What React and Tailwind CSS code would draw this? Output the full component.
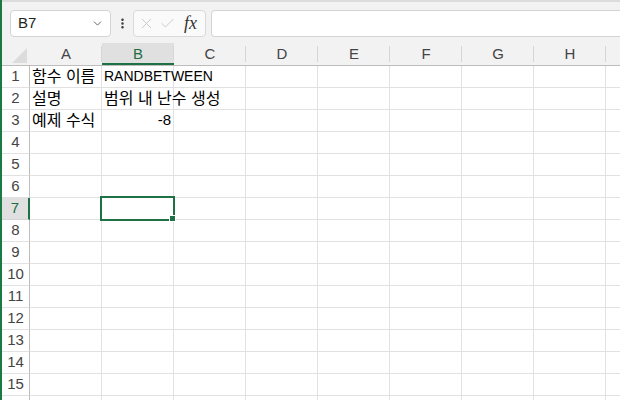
import { ChevronDown, EllipsisVertical, X, Check } from 'lucide-react';

const COLS = ['A', 'B', 'C', 'D', 'E', 'F', 'G', 'H', ''];
const ACTIVE_COL = 'B';
const ACTIVE_ROW = 7;

const DATA = {
  1: { A: '함수 이름', B: 'RANDBETWEEN' },
  2: { A: '설명', B: '범위 내 난수 생성' },
  3: { A: '예제 수식', B: -8 },
};

const font = { fontFamily: '"Liberation Sans", "Noto Sans CJK KR", sans-serif' };
const hangul = /[\uac00-\ud7a3]/;

const FormulaBar = () => (
  <div className="h-[41px] flex items-start pt-[8px] pl-[8px]">
    <div className="w-[101px] h-[27px] bg-white border border-[#d4d4d4] rounded-[4px] flex items-center pl-[7px] pr-[6px] justify-between">
      <span className="text-[15px] text-[#222]">B7</span>
      <ChevronDown className="w-[13px] h-[13px] text-[#555]" strokeWidth={1.6} />
    </div>
    <div className="w-[22px] h-[27px] flex items-center justify-center">
      <EllipsisVertical className="w-[13px] h-[13px] text-[#333]" strokeWidth={2.6} />
    </div>
    <div className="w-[73px] h-[27px] bg-[#fafafa] border border-[#d9d9d9] rounded-[4px] flex items-center pl-[4px] gap-[4px]">
      <X className="w-[17px] h-[17px] text-[#c2c2c2]" strokeWidth={1.2} />
      <Check className="w-[17px] h-[17px] text-[#c2c2c2]" strokeWidth={1.2} />
      <span className="ml-[4px] text-[18px] italic text-[#333]" style={{ fontFamily: '"Liberation Serif", serif' }}>fx</span>
    </div>
    <div className="ml-[5px] flex-1 h-[27px] bg-white border border-[#d4d4d4] rounded-l-[4px] border-r-0" />
  </div>
);

const HeaderRow = () => (
  <div className="flex h-[23px] border-b border-[#bdbdbd]">
    <div className="w-[28px] shrink-0 relative">
      <svg className="absolute right-[3px] bottom-[2px]" width="15" height="15" viewBox="0 0 15 15">
        <polygon points="15,0 15,15 0,15" fill="#dcdcdc" />
      </svg>
    </div>
    {COLS.map((c, i) => {
      const active = c === ACTIVE_COL;
      return (
        <div
          key={i}
          className={
            active
              ? 'w-[72px] shrink-0 flex items-center justify-center bg-[#e0e0e0] border-b-2 border-[#1e7145] text-[#1e6e42] text-[15px] relative'
              : 'w-[72px] shrink-0 flex items-center justify-center text-[#444] text-[15px] relative'
          }
        >
          <span className={active ? 'mt-[2px]' : ''}>{c}</span>
          <span className="absolute right-0 top-[3px] bottom-[3px] w-px bg-[#d6d6d6]" />
        </div>
      );
    })}
  </div>
);

const Row = ({ n, label }) => {
  const rowActive = n === ACTIVE_ROW;
  const cells = DATA[n] || {};
  return (
    <div className="flex h-[22px]">
      <div
        className={
          rowActive
            ? 'w-[28px] shrink-0 flex items-center justify-center bg-[#e0e0e0] border-r-2 border-[#1e7145] text-[#1e6e42] text-[15px] border-b border-b-[#d4d4d4]'
            : 'w-[28px] shrink-0 flex items-center justify-center border-r border-[#bdbdbd] text-[#444] text-[15px] border-b border-b-[#e1e1e1]'
        }
      >
        {label ? n : null}
      </div>
      {COLS.map((c, i) => {
        const v = cells[c];
        const num = typeof v === 'number';
        const selected = rowActive && c === ACTIVE_COL;
        const ko = typeof v === 'string' && hangul.test(v);
        return (
          <div
            key={i}
            className={
              num
                ? 'w-[72px] shrink-0 border-r border-b border-[#e1e1e1] text-[15px] text-black flex items-center justify-end pr-[2px] whitespace-nowrap relative'
                : 'w-[72px] shrink-0 border-r border-b border-[#e1e1e1] text-[14px] text-black flex items-center pl-[2px] whitespace-nowrap relative'
            }
          >
            {v !== undefined && (
              <span className={ko ? 'relative z-10 text-[16px]' : 'relative z-10'}>{v}</span>
            )}
            {selected && (
              <>
                <div className="absolute -left-[2px] -top-[2px] w-[75px] h-[25px] border-2 border-[#1e7145] z-20" />
                <div className="absolute -right-[3px] -bottom-[3px] w-[5px] h-[5px] bg-[#1e7145] border border-white z-30 box-content" />
              </>
            )}
          </div>
        );
      })}
    </div>
  );
};

export default function App() {
  const rows = Array.from({ length: 16 }, (_, i) => i + 1);
  return (
    <div className="w-[620px] h-[400px] overflow-hidden bg-white border-l-2 border-[#1a7a44] relative" style={font}>
      <div className="bg-[#f2f2f2] border-t-2 border-[#dcdcdc]">
        <FormulaBar />
        <HeaderRow />
      </div>
      <div className="bg-white">
        {rows.map((n) => (
          <Row key={n} n={n} label={n <= 15} />
        ))}
      </div>
    </div>
  );
}
